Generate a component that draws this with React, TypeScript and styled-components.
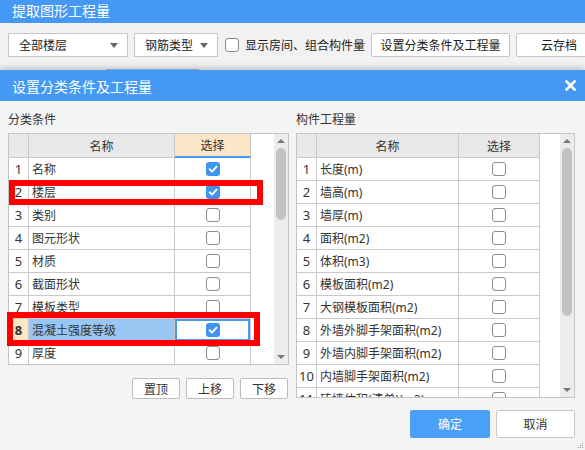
import React from 'react';
import styled, { createGlobalStyle, css } from 'styled-components';

const GlobalStyle = createGlobalStyle`
  html, body {
    margin: 0;
    padding: 0;
  }
  body {
    font-family: "Noto Sans", "Noto Sans CJK SC", sans-serif;
    font-size: 12px;
    color: #333;
  }
  * {
    box-sizing: border-box;
  }
`;

const BLUE = '#4599f5';
const PEACH = '#fde5c7';
const LINE = '#c9c9c9';

interface Item {
  name: string;
  checked?: boolean;
  active?: boolean;
}

const conditions: Item[] = [
  { name: '名称', checked: true },
  { name: '楼层', checked: true },
  { name: '类别' },
  { name: '图元形状' },
  { name: '材质' },
  { name: '截面形状' },
  { name: '模板类型' },
  { name: '混凝土强度等级', checked: true, active: true },
  { name: '厚度' },
];

const quantities: Item[] = [
  { name: '长度(m)' },
  { name: '墙高(m)' },
  { name: '墙厚(m)' },
  { name: '面积(m2)' },
  { name: '体积(m3)' },
  { name: '模板面积(m2)' },
  { name: '大钢模板面积(m2)' },
  { name: '外墙外脚手架面积(m2)' },
  { name: '外墙内脚手架面积(m2)' },
  { name: '内墙脚手架面积(m2)' },
  { name: '砖墙体积(清单)(m3)' },
];

const CheckBox = ({ checked }: { checked?: boolean }) => (
  <CheckBoxStyle $checked={checked}>
    {checked && (
      <svg width="14" height="14" viewBox="0 0 14 14">
        <path d="M3.6 7.3 L6 9.6 L10.6 4.6" fill="none" stroke="#fff" strokeWidth="1.9" strokeLinecap="round" strokeLinejoin="round" />
      </svg>
    )}
  </CheckBoxStyle>
);

const ScrollBar = ({ thumb }: { thumb: number }) => (
  <ScrollTrack>
    <Arrow $dir="up" />
    <Thumb style={{ height: thumb }} />
    <Arrow $dir="down" />
  </ScrollTrack>
);

interface TableProps {
  items: Item[];
  cols: string;
  height: number;
  thumb: number;
  markSelect?: boolean;
}

const Table = ({ items, cols, height, thumb, markSelect }: TableProps) => (
  <TableFrame $height={height}>
    <Grid>
      <Row $cols={cols} $header>
        <HeadCell />
        <HeadCell>名称</HeadCell>
        <HeadCell $marked={markSelect}>选择</HeadCell>
      </Row>
      {items.map((item, i) => (
        <Row key={item.name} $cols={cols}>
          <NumCell $active={item.active}>{i + 1}</NumCell>
          <NameCell $active={item.active}>{item.name}</NameCell>
          <SelectCell $active={item.active}>
            <CheckBox checked={item.checked} />
          </SelectCell>
        </Row>
      ))}
    </Grid>
    <ScrollBar thumb={thumb} />
  </TableFrame>
);

const App = () => {
  return (
    <Page>
      <GlobalStyle />
      <TitleBar>提取图形工程量</TitleBar>
      <Toolbar>
        <Controls>
          <Select $width={120}>
            全部楼层
            <Caret />
          </Select>
          <Select $width={84}>
            钢筋类型
            <Caret />
          </Select>
          <CheckLabel>
            <CheckBox />
            显示房间、组合构件量
          </CheckLabel>
          <ToolButton $width={139}>设置分类条件及工程量</ToolButton>
          <ToolButton $width={86}>云存档</ToolButton>
        </Controls>
        <TabHint />
      </Toolbar>

      <Dialog>
        <DialogHeader>
          设置分类条件及工程量
          <svg width="11" height="11" viewBox="0 0 11 11">
            <path d="M1.5 1.5 L9.5 9.5 M9.5 1.5 L1.5 9.5" stroke="#fff" strokeWidth="2.6" strokeLinecap="square" />
          </svg>
        </DialogHeader>
        <DialogBody>
          <Panels>
            <Panel $width={281}>
              <PanelLabel>分类条件</PanelLabel>
              <TableWrap>
                <Table items={conditions} cols="20px 146px 76px" height={232} thumb={72} markSelect />
                <Marker style={{ left: 1, top: 47, width: 254, height: 25 }} />
                <Marker style={{ left: -1, top: 179, width: 253, height: 34 }} />
              </TableWrap>
              <MoveButtons>
                <SmallButton>置顶</SmallButton>
                <SmallButton>上移</SmallButton>
                <SmallButton>下移</SmallButton>
              </MoveButtons>
            </Panel>
            <Panel $width={279}>
              <PanelLabel>构件工程量</PanelLabel>
              <Table items={quantities} cols="20px 142px 81px" height={265} thumb={168} />
            </Panel>
          </Panels>
          <Footer>
            <DialogButton $primary>确定</DialogButton>
            <DialogButton>取消</DialogButton>
          </Footer>
        </DialogBody>
        <Grip>
          <svg width="6" height="6" viewBox="0 0 6 6">
            <rect x="4" y="0" width="1" height="1" fill="#9a9a9a" />
            <rect x="2" y="2" width="1" height="1" fill="#9a9a9a" />
            <rect x="4" y="2" width="1" height="1" fill="#9a9a9a" />
            <rect x="0" y="4" width="1" height="1" fill="#9a9a9a" />
            <rect x="2" y="4" width="1" height="1" fill="#9a9a9a" />
            <rect x="4" y="4" width="1" height="1" fill="#9a9a9a" />
          </svg>
        </Grip>
      </Dialog>
    </Page>
  );
};

const Page = styled.div`
  width: 585px;
  height: 450px;
  overflow: hidden;
  display: flex;
  flex-direction: column;
  background: #f2f2f2;
`;

const TitleBar = styled.div`
  height: 23px;
  padding-left: 12px;
  background: ${BLUE};
  color: #fff;
  font-size: 14px;
  line-height: 22px;
`;

const Toolbar = styled.div`
  height: 47px;
  display: flex;
  flex-direction: column;
  background: #f2f2f2;
`;

const Controls = styled.div`
  display: flex;
  align-items: center;
  gap: 6px;
  padding: 10px 0 0 8px;
  color: #222;
  white-space: nowrap;
`;

const Select = styled.div<{ $width: number }>`
  width: ${({ $width }) => $width}px;
  height: 24px;
  flex-shrink: 0;
  display: flex;
  align-items: center;
  justify-content: space-between;
  padding: 0 9px 0 10px;
  background: #fff;
  border: 1px solid #c6c6c6;
  font-size: 12px;
`;

const Caret = styled.span`
  width: 0;
  height: 0;
  border-left: 4px solid transparent;
  border-right: 4px solid transparent;
  border-top: 5px solid #666;
`;

const CheckLabel = styled.label`
  display: flex;
  align-items: center;
  gap: 6px;
  margin-left: 1px;
  font-size: 12px;
`;

const ToolButton = styled.div<{ $width: number }>`
  width: ${({ $width }) => $width}px;
  height: 24px;
  flex-shrink: 0;
  display: flex;
  align-items: center;
  justify-content: center;
  background: #fff;
  border: 1px solid #c6c6c6;
  border-radius: 2px;
  font-size: 12px;
`;

const TabHint = styled.div`
  margin: auto 0 0 106px;
  width: 93px;
  height: 1px;
  background: #93c2f5;
`;

const Dialog = styled.div`
  position: relative;
  z-index: 1;
  flex: 1;
  display: flex;
  flex-direction: column;
  background: #f4f4f4;
  border-top-right-radius: 3px;
  box-shadow: 0 -2px 6px rgba(0, 0, 0, 0.22);
`;

const DialogHeader = styled.div`
  height: 31px;
  display: flex;
  align-items: center;
  justify-content: space-between;
  padding: 0 9px 0 12px;
  background: ${BLUE};
  color: #fff;
  font-size: 14px;
`;

const DialogBody = styled.div`
  display: flex;
  flex-direction: column;
  padding: 10px 10px 0 8px;
`;

const Panels = styled.div`
  display: flex;
  gap: 7px;
`;

const Panel = styled.div<{ $width: number }>`
  width: ${({ $width }) => $width}px;
  display: flex;
  flex-direction: column;
`;

const PanelLabel = styled.div`
  height: 18px;
  margin-bottom: 4px;
  line-height: 18px;
  font-size: 12px;
  color: #333;
`;

const TableWrap = styled.div`
  position: relative;
`;

const TableFrame = styled.div<{ $height: number }>`
  height: ${({ $height }) => $height}px;
  display: flex;
  background: #fff;
  border: 1px solid #c4c4c4;
`;

const Grid = styled.div`
  flex: 1;
  overflow: hidden;
`;

const Row = styled.div<{ $cols: string; $header?: boolean }>`
  display: grid;
  grid-template-columns: ${({ $cols }) => $cols};
  height: ${({ $header }) => ($header ? 24 : 23)}px;
`;

const cellBase = css`
  display: flex;
  align-items: center;
  border-right: 1px solid ${LINE};
  border-bottom: 1px solid ${LINE};
  white-space: nowrap;
  overflow: hidden;
`;

const HeadCell = styled.div<{ $marked?: boolean }>`
  ${cellBase};
  justify-content: center;
  background: ${({ $marked }) => ($marked ? PEACH : '#e8e8e8')};
  font-size: 12px;
  color: #333;
  ${({ $marked }) =>
    $marked &&
    css`
      border-bottom: 2px solid ${BLUE};
    `}
`;

const NumCell = styled.div<{ $active?: boolean }>`
  ${cellBase};
  justify-content: center;
  font-size: 13px;
  color: #333;
  background: ${({ $active }) => ($active ? PEACH : '#fff')};
  font-weight: ${({ $active }) => ($active ? 'bold' : 'normal')};
`;

const NameCell = styled.div<{ $active?: boolean }>`
  ${cellBase};
  padding-left: 3px;
  font-size: 12px;
  color: #333;
  background: ${({ $active }) => ($active ? '#99c7f3' : '#fff')};
`;

const SelectCell = styled.div<{ $active?: boolean }>`
  ${cellBase};
  justify-content: center;
  background: #fff;
  box-shadow: ${({ $active }) => ($active ? `inset 0 0 0 2px ${BLUE}` : 'none')};
`;

const CheckBoxStyle = styled.span<{ $checked?: boolean }>`
  width: 14px;
  height: 14px;
  flex-shrink: 0;
  display: inline-flex;
  border-radius: 3px;
  background: ${({ $checked }) => ($checked ? '#3f94f3' : '#fff')};
  border: ${({ $checked }) => ($checked ? 'none' : '1px solid #8c8c8c')};
`;

const ScrollTrack = styled.div`
  width: 14px;
  display: flex;
  flex-direction: column;
  align-items: center;
  background: #ececec;
`;

const Arrow = styled.div<{ $dir: 'up' | 'down' }>`
  width: 14px;
  height: 14px;
  flex-shrink: 0;
  display: flex;
  align-items: center;
  justify-content: center;
  margin-top: ${({ $dir }) => ($dir === 'down' ? 'auto' : '0')};

  &::before {
    content: '';
    width: 0;
    height: 0;
    border-left: 4px solid transparent;
    border-right: 4px solid transparent;
    ${({ $dir }) =>
      $dir === 'up' ? 'border-bottom: 4px solid #777;' : 'border-top: 4px solid #777;'}
  }
`;

const Thumb = styled.div`
  width: 10px;
  border-radius: 5px;
  background: #c2c2c2;
`;

const Marker = styled.div`
  position: absolute;
  border: 6px solid #ff0000;
  pointer-events: none;
`;

const MoveButtons = styled.div`
  display: flex;
  justify-content: flex-end;
  gap: 6px;
  margin-top: 13px;
  padding-right: 1px;
`;

const SmallButton = styled.div`
  width: 48px;
  height: 21px;
  display: flex;
  align-items: center;
  justify-content: center;
  background: #fff;
  border: 1px solid #bcbcbc;
  border-radius: 2px;
  font-size: 12px;
  color: #333;
`;

const Footer = styled.div`
  display: flex;
  justify-content: flex-end;
  gap: 6px;
  margin-top: 11px;
`;

const DialogButton = styled.div<{ $primary?: boolean }>`
  width: ${({ $primary }) => ($primary ? 80 : 79)}px;
  height: 28px;
  display: flex;
  align-items: center;
  justify-content: center;
  border-radius: 2px;
  font-size: 12px;
  background: ${({ $primary }) => ($primary ? '#4a9ff7' : '#fff')};
  color: ${({ $primary }) => ($primary ? '#fff' : '#333')};
  border: 1px solid ${({ $primary }) => ($primary ? '#4a9ff7' : '#c8c8c8')};
`;

const Grip = styled.div`
  position: absolute;
  right: 1px;
  bottom: 1px;
  display: flex;
`;

export default App;
